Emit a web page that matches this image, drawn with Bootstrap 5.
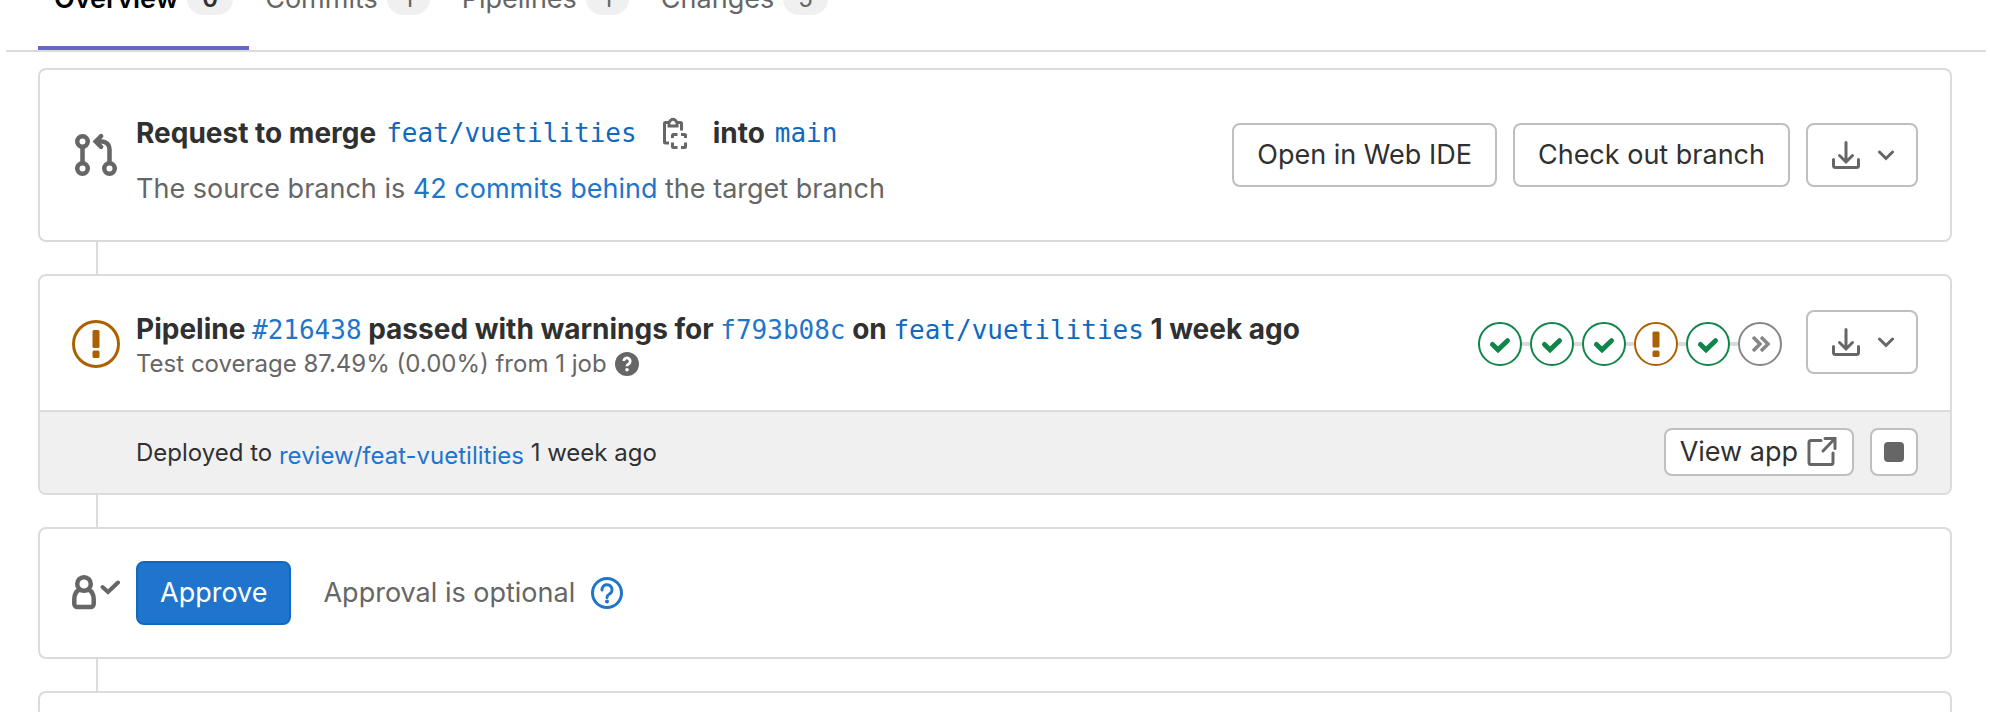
<!DOCTYPE html>
<html lang="en">
<head>
<meta charset="utf-8">
<meta name="viewport" content="width=device-width, initial-scale=1">
<title>Merge request overview</title>
<link rel="stylesheet" href="https://cdn.jsdelivr.net/npm/bootstrap@5.3.0/dist/css/bootstrap.min.css">
<style>
  body { font-family: Inter, "Liberation Sans", sans-serif; font-size: 27px; line-height: 32px; color: #303030; background: #fff; }
  a { color: #1f75cb; text-decoration: none; }
  a:hover { text-decoration: underline; }
  svg { flex: none; display: block; }
  .mono { font-family: "DejaVu Sans Mono", monospace; font-size: 26px; font-weight: 400; }
  .ref { color: #1068bf; }
  .muted { color: #666; }
  .text-sm { font-size: 24px; line-height: 28px; }
  .heading { font-size: 28px; font-weight: 700; }

  .tabbar { height: 52px; margin: 0 4px 16px 6px; padding-left: 32px; border-bottom: 2px solid #dbdbdb; overflow: hidden; }
  .tabbar .nav-link { display: flex; align-items: center; gap: 9px; padding: 0 16px 31px; border-bottom: 4px solid transparent; color: #666; }
  .tabbar .nav-link.active { color: #000; font-weight: 600; border-color: #6666c4; }
  .count { min-width: 43px; padding: 0 15px; border-radius: 16px; background: #f0f0f0; color: #666; font-size: 24px; font-weight: 400; line-height: 32px; text-align: center; }
  .active .count { color: #303030; font-weight: 600; }

  .stack { padding: 0 38px; }
  .panel { border: 2px solid #dbdbdb; border-radius: 8px; }
  .panel-row { gap: 16px; padding: 32px; }
  .panel-row.tall { padding-block: 35px; }
  .panel-row.mid { padding-block: 33px 32px; }
  .link-line { height: 32px; margin-left: 58px; border-left: 2px solid #dbdbdb; }
  .glyph { width: 48px; }
  .title-line { line-height: 40px; }
  .branch-line { min-height: 48px; gap: 10px; }
  .copy { margin: 0 12px; }
  .deploy { background: #f0f0f0; border-top: 2px solid #dbdbdb; border-radius: 0 0 6px 6px; padding: 16px 32px 17px 96px; }

  .btn-line { --bs-btn-color: #303030; --bs-btn-bg: #fff; --bs-btn-border-color: #bfbfbf; --bs-btn-border-width: 2px; --bs-btn-hover-bg: #f0f0f0; --bs-btn-hover-border-color: #868686; }
  .btn-main { --bs-btn-color: #fff; --bs-btn-bg: #1f75cb; --bs-btn-border-color: #1068bf; --bs-btn-border-width: 2px; --bs-btn-hover-color: #fff; --bs-btn-hover-bg: #1068bf; }
  .btn-lg2 { height: 64px; padding: 0 23px; border-radius: 8px; font-size: 27px; line-height: 32px; }
  .btn-tight { padding: 0 22px; }
  .btn-sm2 { height: 48px; padding: 0 14px; border-radius: 8px; font-size: 27px; line-height: 32px; }
  .stop { width: 48px; padding: 0; }

  .stage { width: 44px; height: 44px; }
  .joint { width: 8px; height: 4px; background: #dbdbdb; }
</style>
</head>
<body class="d-flex flex-column vh-100 overflow-hidden">

<svg width="0" height="0" class="position-absolute" aria-hidden="true">
  <symbol id="download" viewBox="0 0 32 32"><path d="M16 3.500V23M9.500 16.500L16 23l6.500-6.500" fill="none" stroke="#666" stroke-width="3" stroke-linecap="round"/><path d="M3.500 20.500V26.500a2 2 0 0 0 2 2h21a2 2 0 0 0 2-2V20.500" fill="none" stroke="#666" stroke-width="3" stroke-linecap="round"/></symbol>
  <symbol id="chevron" viewBox="0 0 16 16"><path d="M1.500 5L8 11.500 14.500 5" fill="none" stroke="#666" stroke-width="3" stroke-linecap="round"/></symbol>
  <symbol id="pass" viewBox="0 0 44 44"><circle cx="22" cy="22" r="21" fill="#fff" stroke="#108548" stroke-width="2"/><path d="M14.500 22.500l5.500 5.200 9.500-9" fill="none" stroke="#108548" stroke-width="5" stroke-linecap="round"/></symbol>
</svg>

<header>
  <nav class="nav tabbar flex-nowrap align-items-end">
    <a class="nav-link active" href="#overview">Overview <span class="count">0</span></a>
    <a class="nav-link" href="#commits">Commits <span class="count">1</span></a>
    <a class="nav-link" href="#pipelines">Pipelines <span class="count">1</span></a>
    <a class="nav-link" href="#changes">Changes <span class="count">5</span></a>
  </nav>
</header>

<main class="stack d-flex flex-column flex-grow-1">
  <section class="panel">
    <div class="panel-row tall d-flex align-items-center">
      <svg class="glyph" height="48" viewBox="0 0 16 16" fill="none" stroke="#666" stroke-width="1.500" aria-hidden="true"><circle cx="3.500" cy="3.500" r="1.750"/><circle cx="3.500" cy="12.500" r="1.750"/><circle cx="12.500" cy="12.500" r="1.750"/><path d="M3.500 5.500v5M12.500 10.500V6A2.500 2.500 0 0 0 10 3.500H8.500"/><path d="M9.700 1.700L7.900 3.500 9.700 5.300" stroke-linecap="round"/></svg>
      <div class="flex-grow-1 pt-1">
        <div class="branch-line heading d-flex align-items-center">
          <span>Request to merge</span>
          <a class="mono ref" href="#source">feat/vuetilities</a>
          <button type="button" class="copy btn p-0 border-0" aria-label="Copy branch name"><svg width="32" height="32" viewBox="0 0 32 32" fill="none" stroke="#666" stroke-width="3"><path d="M10 5.500H6.500a1 1 0 0 0-1 1V25a1 1 0 0 0 1 1H10M18 5.500h3.500a1 1 0 0 1 1 1V13.500"/><path d="M10 5.500V9h8V5.500L16.500 3.500a3 3 0 0 0-5 0z"/><path d="M18.500 17.500h-4a1 1 0 0 0-1 1v2.500M22 17.500h3.500a1 1 0 0 1 1 1v2.500M13.500 25.500v4a1 1 0 0 0 1 1h4M26.500 25.500v4a1 1 0 0 1-1 1H22"/></svg></button>
          <span>into</span>
          <a class="mono ref" href="#target">main</a>
        </div>
        <div class="muted mt-3">The source branch is <a href="#behind">42 commits behind</a> the target branch</div>
      </div>
      <button type="button" class="btn btn-line btn-lg2">Open in Web IDE</button>
      <button type="button" class="btn btn-line btn-lg2">Check out branch</button>
      <button type="button" class="btn btn-line btn-lg2 btn-tight d-flex align-items-center gap-3" aria-label="Download patches"><svg width="32" height="32"><use href="#download"/></svg><svg width="16" height="16"><use href="#chevron"/></svg></button>
    </div>
  </section>
  <div class="link-line"></div>

  <section class="panel">
    <div class="panel-row mid d-flex align-items-center">
      <svg class="glyph" height="48" viewBox="0 0 48 48" aria-hidden="true"><circle cx="24" cy="24" r="22.500" fill="none" stroke="#ab6100" stroke-width="3"/><rect x="20.500" y="10" width="7" height="18" rx="1.500" fill="#ab6100"/><rect x="20.500" y="30.500" width="7" height="7.500" rx="1.500" fill="#ab6100"/></svg>
      <div class="flex-grow-1">
        <div class="title-line heading">Pipeline <a class="mono" href="#pipeline">#216438</a> passed with warnings for <a class="mono" href="#commit">f793b08c</a> on <a class="mono ref" href="#source">feat/vuetilities</a> 1 week ago</div>
        <div class="text-sm muted d-flex align-items-center gap-2">Test coverage 87.49% (0.00%) from 1 job
          <svg width="24" height="24" viewBox="0 0 24 24" role="img" aria-label="Help"><circle cx="12" cy="12" r="12" fill="#666"/><path d="M8.800 9a3.200 3.200 0 1 1 4.700 3c-1 .5-1.500 1-1.500 2.300" fill="none" stroke="#fff" stroke-width="2.800"/><circle cx="12" cy="17.800" r="1.800" fill="#fff"/></svg>
        </div>
      </div>
      <div class="d-flex align-items-center me-2">
        <svg class="stage" role="img" aria-label="Passed"><use href="#pass"/></svg><span class="joint"></span>
        <svg class="stage" role="img" aria-label="Passed"><use href="#pass"/></svg><span class="joint"></span>
        <svg class="stage" role="img" aria-label="Passed"><use href="#pass"/></svg><span class="joint"></span>
        <svg class="stage" viewBox="0 0 44 44" role="img" aria-label="Warning"><circle cx="22" cy="22" r="21" fill="#fff" stroke="#ab6100" stroke-width="2"/><rect x="18.500" y="9.500" width="7" height="16" rx="1.500" fill="#ab6100"/><rect x="18.500" y="28.500" width="7" height="6.500" rx="1.500" fill="#ab6100"/></svg><span class="joint"></span>
        <svg class="stage" role="img" aria-label="Passed"><use href="#pass"/></svg><span class="joint"></span>
        <svg class="stage" viewBox="0 0 44 44" role="img" aria-label="Skipped"><circle cx="22" cy="22" r="21" fill="#fff" stroke="#868686" stroke-width="2"/><path d="M15 15l7 7-7 7M23 15l7 7-7 7" fill="none" stroke="#868686" stroke-width="3.500"/></svg>
      </div>
      <button type="button" class="btn btn-line btn-lg2 btn-tight d-flex align-items-center gap-3 mb-1" aria-label="Download artifacts"><svg width="32" height="32"><use href="#download"/></svg><svg width="16" height="16"><use href="#chevron"/></svg></button>
    </div>
    <div class="deploy d-flex align-items-center gap-3">
      <div class="text-sm flex-grow-1 pt-1">Deployed to <a class="d-inline-block pt-1 align-middle" href="#environment">review/feat-vuetilities</a> 1 week ago</div>
      <button type="button" class="btn btn-line btn-sm2 d-flex align-items-center gap-2">View app
        <svg width="32" height="32" viewBox="0 0 32 32" fill="none" stroke="#666" stroke-width="3"><path d="M15 4.500H5a2 2 0 0 0-2 2v20a2 2 0 0 0 2 2h20a2 2 0 0 0 2-2V17M19 2.500h10v10M28.500 3L17 15" stroke-linecap="round"/></svg>
      </button>
      <button type="button" class="btn btn-line btn-sm2 stop d-flex align-items-center justify-content-center" aria-label="Stop environment"><svg width="20" height="20"><rect width="20" height="20" rx="4" fill="#666"/></svg></button>
    </div>
  </section>
  <div class="link-line"></div>

  <section class="panel">
    <div class="panel-row d-flex align-items-center">
      <svg class="glyph" height="48" viewBox="0 0 48 48" fill="none" stroke="#666" stroke-width="4.500" aria-hidden="true"><circle cx="12" cy="15" r="6.800"/><path d="M7.500 20.500C4 22.500 2.300 26 2.300 30v5a3 3 0 0 0 3 3h13.400a3 3 0 0 0 3-3v-5c0-4-1.700-7.500-5.200-9.500"/><path d="M30.500 18l5.500 5 10-9.500" stroke-linecap="round" stroke-width="4"/></svg>
      <button type="button" class="btn btn-main btn-lg2 btn-tight">Approve</button>
      <span class="muted ms-3">Approval is optional</span>
      <a href="#help" aria-label="Help"><svg width="32" height="32" viewBox="0 0 32 32" fill="none" stroke="#1f75cb" stroke-width="3"><circle cx="16" cy="16" r="14.500"/><path d="M11 13a5 5 0 1 1 7.200 4.200C16.700 18 16 18.700 16 20.500" stroke-linecap="round"/><circle cx="16" cy="24.500" r="2" fill="#1f75cb" stroke="none"/></svg></a>
    </div>
  </section>
  <div class="link-line"></div>

  <section class="panel flex-grow-1 border-bottom-0 rounded-bottom-0"></section>
</main>

<script src="https://cdn.jsdelivr.net/npm/bootstrap@5.3.0/dist/js/bootstrap.bundle.min.js"></script>
</body>
</html>
